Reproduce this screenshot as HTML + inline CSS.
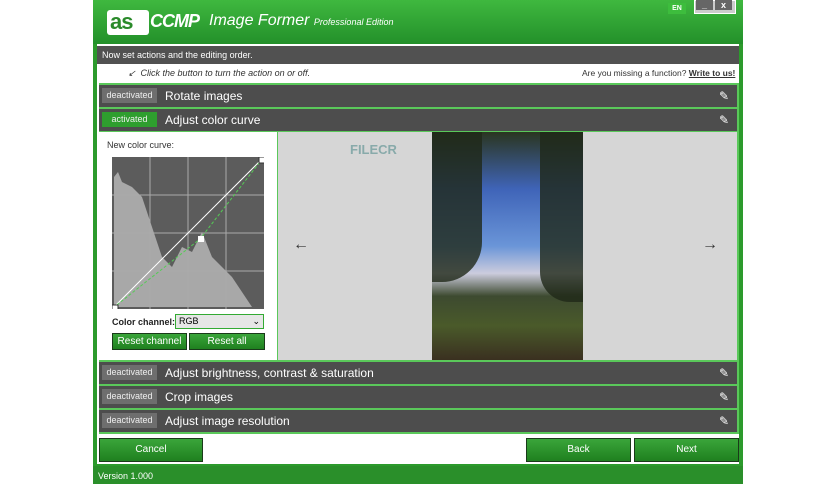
<!DOCTYPE html><html><head><style>
body{margin:0;width:836px;height:484px;background:#fff;position:relative;overflow:hidden;font-family:"Liberation Sans",sans-serif}
.a{position:absolute}
.row{position:absolute;left:99px;width:638px;height:22px;background:#4d4d4d;color:#fff;font-size:12px}
.row .b{position:absolute;left:3px;top:3px;width:55px;height:15px;background:#6e6e6e;color:#eee;font-size:9px;line-height:15px;text-align:center}
.row .t{position:absolute;left:66px;top:4px}
.row .p{position:absolute;right:8px;top:4px;color:#fff;font-size:12px}
.btn{position:absolute;height:22px;background:linear-gradient(#3aa53a,#1f801f);color:#fff;font-size:10px;line-height:22px;text-align:center;border:1px solid #1a3a1a}
</style></head><body>
<div class="a" style="left:93px;top:0;width:650px;height:484px;background:#2c9a2c"></div>
<div class="a" style="left:93px;top:0;width:650px;height:44px;background:linear-gradient(#3fb83f,#23902a)"></div>
<div class="a" style="left:107px;top:10px;width:42px;height:25px;background:#fff;border-radius:3px"></div>
<div class="a" style="left:110px;top:9px;font:bold 22px 'Liberation Sans';color:#2a8a2a;letter-spacing:-1px">as</div>
<div class="a" style="left:150px;top:11px;font:bold italic 18px 'Liberation Sans';color:#fff;letter-spacing:-1px">CCMP</div>
<div class="a" style="left:209px;top:12px;font:italic 16px 'Liberation Sans';color:#fff">Image Former <span style="font-size:9px">Professional Edition</span></div>
<div class="a" style="left:668px;top:3px;width:18px;height:11px;background:#3dbd3d;color:#fff;font:bold 7px 'Liberation Sans';text-align:center;line-height:11px">EN</div>
<div class="a" style="left:694px;top:0;width:40px;height:12px;background:#ccc;border:1px solid #fff"></div>
<div class="a" style="left:696px;top:0;width:17px;height:10px;background:#666;color:#fff;font:bold 9px sans-serif;text-align:center">_</div>
<div class="a" style="left:715px;top:0;width:17px;height:10px;background:#666;color:#fff;font:bold 9px sans-serif;text-align:center;line-height:10px">x</div>
<div class="a" style="left:97px;top:44px;width:642px;height:420px;background:#fff"></div>
<div class="a" style="left:97px;top:46px;width:642px;height:18px;background:#515151;color:#fff;font-size:9px;line-height:18px;text-indent:5px">Now set actions and the editing order.</div>
<div class="a" style="left:128px;top:68px;font:italic 9px 'Liberation Sans';color:#333">↙ &nbsp;Click the button to turn the action on or off.</div>
<div class="a" style="left:582px;top:68px;font:8.5px 'Liberation Sans';color:#333">Are you missing a function? <b style="text-decoration:underline">Write to us!</b></div>
<div class="a" style="left:99px;top:83px;width:640px;height:351px;background:#5ac85a"></div>
<div class="row" style="top:85px"><div class="b">deactivated</div><div class="t">Rotate images</div><div class="p">✎</div></div>
<div class="row" style="top:109px"><div class="b" style="background:#2e9e2e">activated</div><div class="t">Adjust color curve</div><div class="p">✎</div></div>
<div class="a" style="left:99px;top:132px;width:178px;height:228px;background:#fff"></div>
<div class="a" style="left:107px;top:140px;font-size:9px;color:#333">New color curve:</div>
<svg class="a" style="left:112px;top:157px" width="152" height="152">
<rect width="152" height="152" fill="#5c5c5c"/>
<path d="M2 150 L2 20 L6 15 L10 25 L20 30 L30 40 L40 70 L50 100 L60 110 L70 90 L80 95 L90 75 L100 100 L110 110 L120 120 L130 135 L140 150Z" fill="#a8a8a8"/>
<g stroke="#aaa" stroke-width="1"><line x1="38" y1="0" x2="38" y2="152"/><line x1="76" y1="0" x2="76" y2="152"/><line x1="114" y1="0" x2="114" y2="152"/><line y1="38" x1="0" y2="38" x2="152"/><line y1="76" x1="0" y2="76" x2="152"/><line y1="114" x1="0" y2="114" x2="152"/></g>
<line x1="1" y1="151" x2="151" y2="1" stroke="#fff"/>
<path d="M1 151 L88 82 L151 1" stroke="#5c5" fill="none" stroke-dasharray="3 2"/>
<rect x="86" y="79" width="6" height="6" fill="#fff"/><rect x="0" y="148" width="6" height="6" fill="#fff" stroke="#333"/><rect x="147" y="0" width="6" height="6" fill="#fff" stroke="#333"/>
</svg>
<div class="a" style="left:112px;top:317px;font:bold 9px 'Liberation Sans';color:#222">Color channel:</div>
<div class="a" style="left:175px;top:314px;width:87px;height:13px;border:1px solid #3a3;background:#e6e6e6;font-size:9px;line-height:13px;text-indent:3px">RGB<span style="float:right;margin-right:3px">⌄</span></div>
<div class="btn" style="left:112px;top:333px;width:73px;height:15px;line-height:15px">Reset channel</div>
<div class="btn" style="left:189px;top:333px;width:74px;height:15px;line-height:15px">Reset all</div>
<div class="a" style="left:278px;top:132px;width:459px;height:228px;background:#d6d6d6"></div>
<div class="a" style="left:293px;top:236px;font-size:16px;color:#333">←</div>
<div class="a" style="left:702px;top:236px;font-size:16px;color:#333">→</div>
<div class="a" style="left:350px;top:142px;font:bold 13px 'Liberation Sans';color:#8aa">FILECR</div>
<div class="a" style="left:432px;top:132px;width:151px;height:228px;background:linear-gradient(#2a3520 0%,#3f64b8 25%,#6a95d8 50%,#ccd 62%,#3d4a30 72%,#4a5a2a 85%,#3a3020 100%)"></div>
<div class="a" style="left:432px;top:132px;width:50px;height:150px;background:#1f2818;opacity:.8;border-radius:0 0 40px 0"></div>
<div class="a" style="left:540px;top:132px;width:43px;height:170px;background:#1f2818;opacity:.8;border-radius:0 0 0 30px"></div>
<div class="row" style="top:362px"><div class="b">deactivated</div><div class="t">Adjust brightness, contrast &amp; saturation</div><div class="p">✎</div></div>
<div class="row" style="top:386px"><div class="b">deactivated</div><div class="t">Crop images</div><div class="p">✎</div></div>
<div class="row" style="top:410px"><div class="b">deactivated</div><div class="t">Adjust image resolution</div><div class="p">✎</div></div>
<div class="btn" style="left:99px;top:438px;width:102px">Cancel</div>
<div class="btn" style="left:526px;top:438px;width:103px">Back</div>
<div class="btn" style="left:634px;top:438px;width:103px">Next</div>
<div class="a" style="left:93px;top:466px;width:650px;height:18px;background:#2a8f2a;color:#fff;font-size:9px;line-height:20px;text-indent:5px">Version 1.000</div>
</body></html>
